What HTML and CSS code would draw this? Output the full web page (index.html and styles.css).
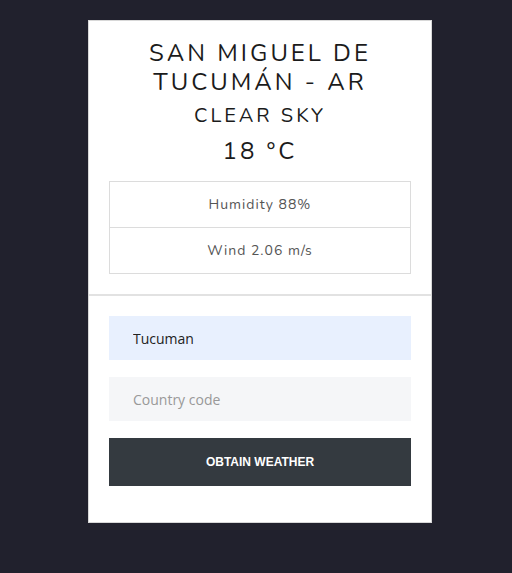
FILE: index.html
```html
<!DOCTYPE html>
<html>
<head>
<meta charset="utf-8">
<link rel="stylesheet" href="styles.css">
</head>
<body>
<div class="card">
  <div class="weather">
    <h1 class="city">SAN MIGUEL DE TUCUMÁN - AR</h1>
    <h2 class="desc">CLEAR SKY</h2>
    <h2 class="temp">18 °C</h2>
    <ul class="details">
      <li>Humidity 88%</li>
      <li>Wind 2.06 m/s</li>
    </ul>
  </div>
  <hr class="sep">
  <form class="form">
    <input class="field filled" type="text" value="Tucuman">
    <input class="field" type="text" placeholder="Country code">
    <button class="btn" type="button">OBTAIN WEATHER</button>
  </form>
</div>
</body>
</html>
```
FILE: styles.css
```css
html, body {
  margin: 0;
  background: #21212d;
  height: 100%;
}
body {
  padding: 20px 0 0 88px;
  box-sizing: border-box;
  font-family: "Nunito", "Lato", "Open Sans", sans-serif;
}
.card {
  width: 344px;
  box-sizing: border-box;
  background: #fff;
  border: 1px solid #d8d8d8;
}
.weather {
  padding: 18px 20px 20px 20px;
  text-align: center;
  color: #1b1b1b;
}
.city {
  margin: 0 8px;
  font-size: 24px;
  font-weight: 400;
  letter-spacing: 3px;
  line-height: 29px;
}
.desc {
  margin: 4px 0 0;
  font-size: 20px;
  font-weight: 400;
  letter-spacing: 3px;
  line-height: 30px;
}
.temp {
  margin: 3px 0 0;
  font-size: 24px;
  font-weight: 400;
  letter-spacing: 3px;
  line-height: 34px;
}
.details {
  list-style: none;
  margin: 13px 0 0;
  padding: 0;
  border: 1px solid #dcdcdc;
}
.details li {
  height: 45px;
  line-height: 45px;
  font-size: 14px;
  color: #555;
  letter-spacing: 1px;
}
.details li + li {
  border-top: 1px solid #dcdcdc;
}
.sep {
  margin: 0;
  border: 0;
  height: 2px;
  background: #e2e2e2;
}
.form {
  display: flex;
  flex-direction: column;
  gap: 17px;
  padding: 20px 20px 36px 20px;
}
.field {
  height: 44px;
  border: 0;
  margin: 0;
  padding: 0 24px;
  background: #f5f6f8;
  font-family: "Open Sans", sans-serif;
  font-size: 14px;
  color: #222;
  outline: none;
}
.field::placeholder {
  color: #999;
}
.field.filled {
  background: #e8f0fe;
}
.btn {
  height: 48px;
  border: 0;
  margin: 0;
  background: #343a40;
  color: #fff;
  font-family: "Liberation Sans", Arial, sans-serif;
  font-weight: 700;
  font-size: 12px;
}
```
